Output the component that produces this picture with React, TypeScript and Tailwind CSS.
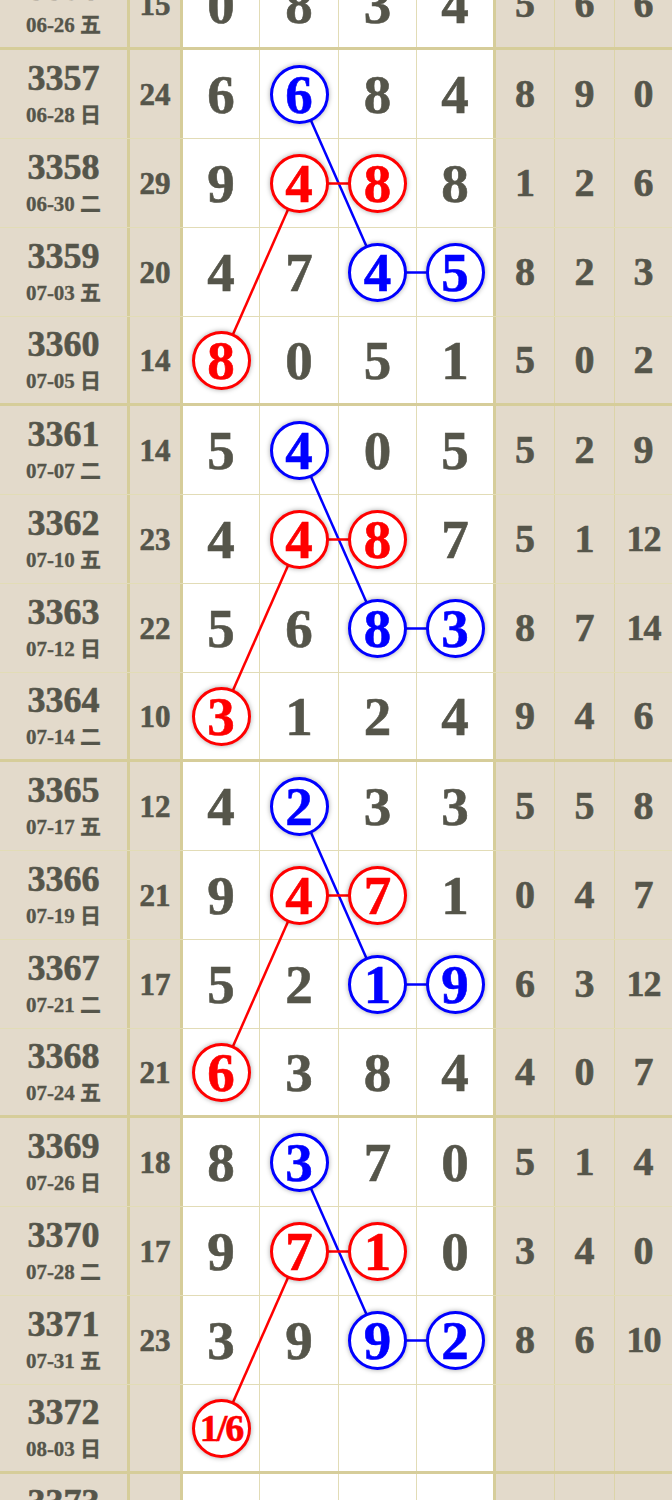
type Mark = 'b' | 'r';

type Row = {
  p: string;
  d: string;
  s: string;
  n: string[];
  r: string[];
  m?: Record<number, Mark>;
};

const rows: Row[] = [
  { p: '3356', d: '06-26 五', s: '15', n: ['0', '8', '3', '4'], r: ['5', '6', '6'] },
  { p: '3357', d: '06-28 日', s: '24', n: ['6', '6', '8', '4'], r: ['8', '9', '0'], m: { 1: 'b' } },
  { p: '3358', d: '06-30 二', s: '29', n: ['9', '4', '8', '8'], r: ['1', '2', '6'], m: { 1: 'r', 2: 'r' } },
  { p: '3359', d: '07-03 五', s: '20', n: ['4', '7', '4', '5'], r: ['8', '2', '3'], m: { 2: 'b', 3: 'b' } },
  { p: '3360', d: '07-05 日', s: '14', n: ['8', '0', '5', '1'], r: ['5', '0', '2'], m: { 0: 'r' } },
  { p: '3361', d: '07-07 二', s: '14', n: ['5', '4', '0', '5'], r: ['5', '2', '9'], m: { 1: 'b' } },
  { p: '3362', d: '07-10 五', s: '23', n: ['4', '4', '8', '7'], r: ['5', '1', '12'], m: { 1: 'r', 2: 'r' } },
  { p: '3363', d: '07-12 日', s: '22', n: ['5', '6', '8', '3'], r: ['8', '7', '14'], m: { 2: 'b', 3: 'b' } },
  { p: '3364', d: '07-14 二', s: '10', n: ['3', '1', '2', '4'], r: ['9', '4', '6'], m: { 0: 'r' } },
  { p: '3365', d: '07-17 五', s: '12', n: ['4', '2', '3', '3'], r: ['5', '5', '8'], m: { 1: 'b' } },
  { p: '3366', d: '07-19 日', s: '21', n: ['9', '4', '7', '1'], r: ['0', '4', '7'], m: { 1: 'r', 2: 'r' } },
  { p: '3367', d: '07-21 二', s: '17', n: ['5', '2', '1', '9'], r: ['6', '3', '12'], m: { 2: 'b', 3: 'b' } },
  { p: '3368', d: '07-24 五', s: '21', n: ['6', '3', '8', '4'], r: ['4', '0', '7'], m: { 0: 'r' } },
  { p: '3369', d: '07-26 日', s: '18', n: ['8', '3', '7', '0'], r: ['5', '1', '4'], m: { 1: 'b' } },
  { p: '3370', d: '07-28 二', s: '17', n: ['9', '7', '1', '0'], r: ['3', '4', '0'], m: { 1: 'r', 2: 'r' } },
  { p: '3371', d: '07-31 五', s: '23', n: ['3', '9', '9', '2'], r: ['8', '6', '10'], m: { 2: 'b', 3: 'b' } },
  { p: '3372', d: '08-03 日', s: '', n: ['1/6', '', '', ''], r: ['', '', ''], m: { 0: 'r' } },
  { p: '3373', d: '08-05 二', s: '', n: ['', '', '', ''], r: ['', '', ''] },
];

const ROW_H = 89;
const colX = [221, 299.5, 378, 456];
const cy = (i: number) => i * ROW_H + 44.5;

const numW = ['w-[77px]', 'w-[79px]', 'w-[78px]', 'w-[79px]'];
const numB = ['border-r', 'border-r', 'border-r', 'border-r-[3px] border-r-[#d6cd9a]'];
const restW = ['w-[59px]', 'w-[60px]', 'w-[57px]'];

function Ball({ v, c }: { v: string; c: Mark }) {
  const color = c === 'b' ? 'border-[#0000ff] text-[#0000ff]' : 'border-[#ff0000] text-[#ff0000]';
  return (
    <div
      className={`relative z-20 w-[59px] h-[59px] rounded-full border-[3px] bg-white flex items-center justify-center shadow-[0_0_5px_rgba(0,0,0,0.35)] ${color} ${
        v.length > 1 ? 'text-[38px] tracking-[-2px]' : 'text-[55px]'
      }`}
    >
      {v}
    </div>
  );
}

export default function App() {
  const lines: { x1: number; y1: number; x2: number; y2: number; c: string }[] = [];
  for (let g = 0; g < 4; g++) {
    const i = 1 + g * 4;
    lines.push({ x1: colX[1], y1: cy(i), x2: colX[2], y2: cy(i + 2), c: '#0000ff' });
    lines.push({ x1: colX[2], y1: cy(i + 2), x2: colX[3], y2: cy(i + 2), c: '#0000ff' });
    lines.push({ x1: colX[1], y1: cy(i + 1), x2: colX[0], y2: cy(i + 3), c: '#ff0000' });
    lines.push({ x1: colX[1], y1: cy(i + 1), x2: colX[2], y2: cy(i + 1), c: '#ff0000' });
  }

  return (
    <div
      className="w-[672px] h-[1500px] overflow-hidden bg-white font-bold text-[#55554a] [-webkit-text-stroke:0.6px_currentColor]"
      style={{ fontFamily: '"Liberation Serif", "Noto Sans CJK SC", serif' }}
    >
      <div className="relative mt-[-39px]">
        {rows.map((row, i) => (
          <div
            key={row.p}
            className={`flex h-[89px] border-[#e2dcb6] ${
              i % 4 === 0 ? 'border-b-[3px] border-b-[#d6cd9a]' : 'border-b'
            }`}
          >
            <div className="w-[130px] bg-[#e3dacb] border-r-[3px] border-r-[#d6cd9a] flex flex-col items-center justify-center leading-none pb-[2px]">
              <span className="text-[36px]">{row.p}</span>
              <span className="text-[21px] mt-[9px] [-webkit-text-stroke:0.3px_currentColor]">{row.d}</span>
            </div>
            <div className="w-[53px] bg-[#e3dacb] border-r-[3px] border-r-[#d6cd9a] flex items-center justify-center text-[31px] pt-[2px]">
              {row.s}
            </div>
            {row.n.map((v, k) => (
              <div
                key={k}
                className={`${numW[k]} ${numB[k]} border-[#e2dcb6] bg-white flex items-center justify-center text-[55px] leading-none`}
              >
                {row.m && row.m[k] ? <Ball v={v} c={row.m[k]} /> : v}
              </div>
            ))}
            {row.r.map((v, k) => (
              <div
                key={k}
                className={`${restW[k]} bg-[#e3dacb] ${
                  k < 2 ? 'border-r border-r-[#dcd4a8]' : ''
                } flex items-center justify-center leading-none ${v.length > 1 ? 'text-[36px] tracking-[-1px]' : 'text-[40px]'}`}
              >
                {v}
              </div>
            ))}
          </div>
        ))}
        <svg className="absolute left-0 top-0 z-10 pointer-events-none" width={672} height={rows.length * ROW_H}>
          {lines.map((l, k) => (
            <line key={k} x1={l.x1} y1={l.y1} x2={l.x2} y2={l.y2} stroke={l.c} strokeWidth={2.5} />
          ))}
        </svg>
      </div>
    </div>
  );
}
